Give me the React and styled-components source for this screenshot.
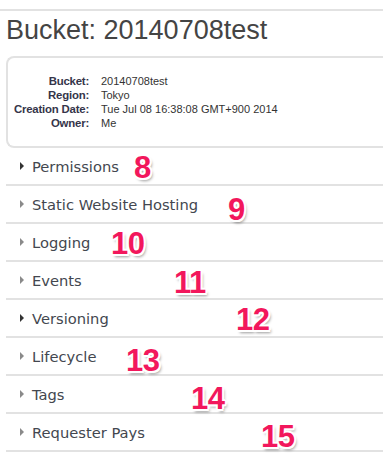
import { Fragment } from "react";
import styled, { createGlobalStyle } from "styled-components";

//! global ..................................................................
const GlobalStyle = createGlobalStyle`
  body {
    margin: 0;
    background: #fff;
    overflow: hidden;
    font-family: "Liberation Sans", Arial, sans-serif;
  }
`;

//! styled components .......................................................
const Page = styled.div`
  width: 383px;
  height: 470px;
  padding-top: 9px;
  box-sizing: border-box;
`;

const TopRule = styled.div`
  height: 2px;
  background: #e2e2e2;
`;

const Title = styled.h1`
  margin: 6px 0 0 6px;
  font-family: "Liberation Sans", Arial, sans-serif;
  font-weight: normal;
  font-size: 27px;
  line-height: 27px;
  color: #444;
`;

const InfoBox = styled.div`
  margin: 12px 0 0 6px;
  border: 2px solid #e2e2e2;
  border-right: none;
  border-radius: 8px 0 0 8px;
  padding: 16px 0 16px 0;
  display: grid;
  grid-template-columns: 81px auto;
  column-gap: 12px;
  align-content: start;
  height: 56px;
`;

const Label = styled.div`
  text-align: right;
  font-size: 11.4px;
  line-height: 14px;
  font-weight: bold;
  color: #35354a;
  letter-spacing: -0.2px;
`;

const Value = styled.div`
  font-size: 11px;
  line-height: 14px;
  color: #333;
`;

const List = styled.div`
  margin-left: 6px;
`;

const Row = styled.div`
  position: relative;
  height: 36px;
  border-bottom: 2px solid #e2e2e2;
  display: flex;
  align-items: center;
  gap: 8px;
  padding-left: 14px;
`;

const Arrow = styled.span`
  width: 0;
  height: 0;
  border-left: 4px solid ${(p) => (p.$dark ? "#333" : "#8a8a8a")};
  border-top: 4px solid transparent;
  border-bottom: 4px solid transparent;
`;

const RowText = styled.span`
  font-family: "DejaVu Sans", Verdana, sans-serif;
  font-size: 14.7px;
  color: #43474f;
`;

const Marker = styled.span`
  position: absolute;
  left: ${(p) => p.$left}px;
  top: ${(p) => p.$top}px;
  font-family: "Liberation Sans", Arial, sans-serif;
  font-weight: bold;
  font-size: 31px;
  line-height: 1;
  letter-spacing: -0.5px;
  color: #f2175c;
  text-shadow:
    -2px 0 0 #fff,
    2px 0 0 #fff,
    0 -2px 0 #fff,
    0 2px 0 #fff,
    -1.5px -1.5px 0 #fff,
    1.5px -1.5px 0 #fff,
    -1.5px 1.5px 0 #fff,
    1.5px 1.5px 0 #fff,
    2px 3px 3px rgba(0, 0, 0, 0.4);
`;

//? data ......................................................................
const info = [
  ["Bucket:", "20140708test"],
  ["Region:", "Tokyo"],
  ["Creation Date:", "Tue Jul 08 16:38:08 GMT+900 2014"],
  ["Owner:", "Me"],
];

const sections = [
  { name: "Permissions", dark: true, num: 8, left: 128, top: 4 },
  { name: "Static Website Hosting", num: 9, left: 222, top: 8 },
  { name: "Logging", num: 10, left: 105, top: 4 },
  { name: "Events", num: 11, left: 168, top: 5 },
  { name: "Versioning", dark: true, num: 12, left: 230, top: 4 },
  { name: "Lifecycle", num: 13, left: 120, top: 7 },
  { name: "Tags", num: 14, left: 185, top: 7 },
  { name: "Requester Pays", num: 15, left: 255, top: 7 },
];

//? App .......................................................................
function App() {
  return (
    <Page>
      <GlobalStyle />
      <TopRule />
      <Title>Bucket: 20140708test</Title>
      <InfoBox>
        {info.map(([label, value]) => (
          <Fragment key={label}>
            <Label>{label}</Label>
            <Value>{value}</Value>
          </Fragment>
        ))}
      </InfoBox>
      <List>
        {sections.map((s) => (
          <Row key={s.name}>
            <Arrow $dark={s.dark} />
            <RowText>{s.name}</RowText>
            <Marker $left={s.left} $top={s.top}>
              {s.num}
            </Marker>
          </Row>
        ))}
      </List>
    </Page>
  );
}

export default App;
